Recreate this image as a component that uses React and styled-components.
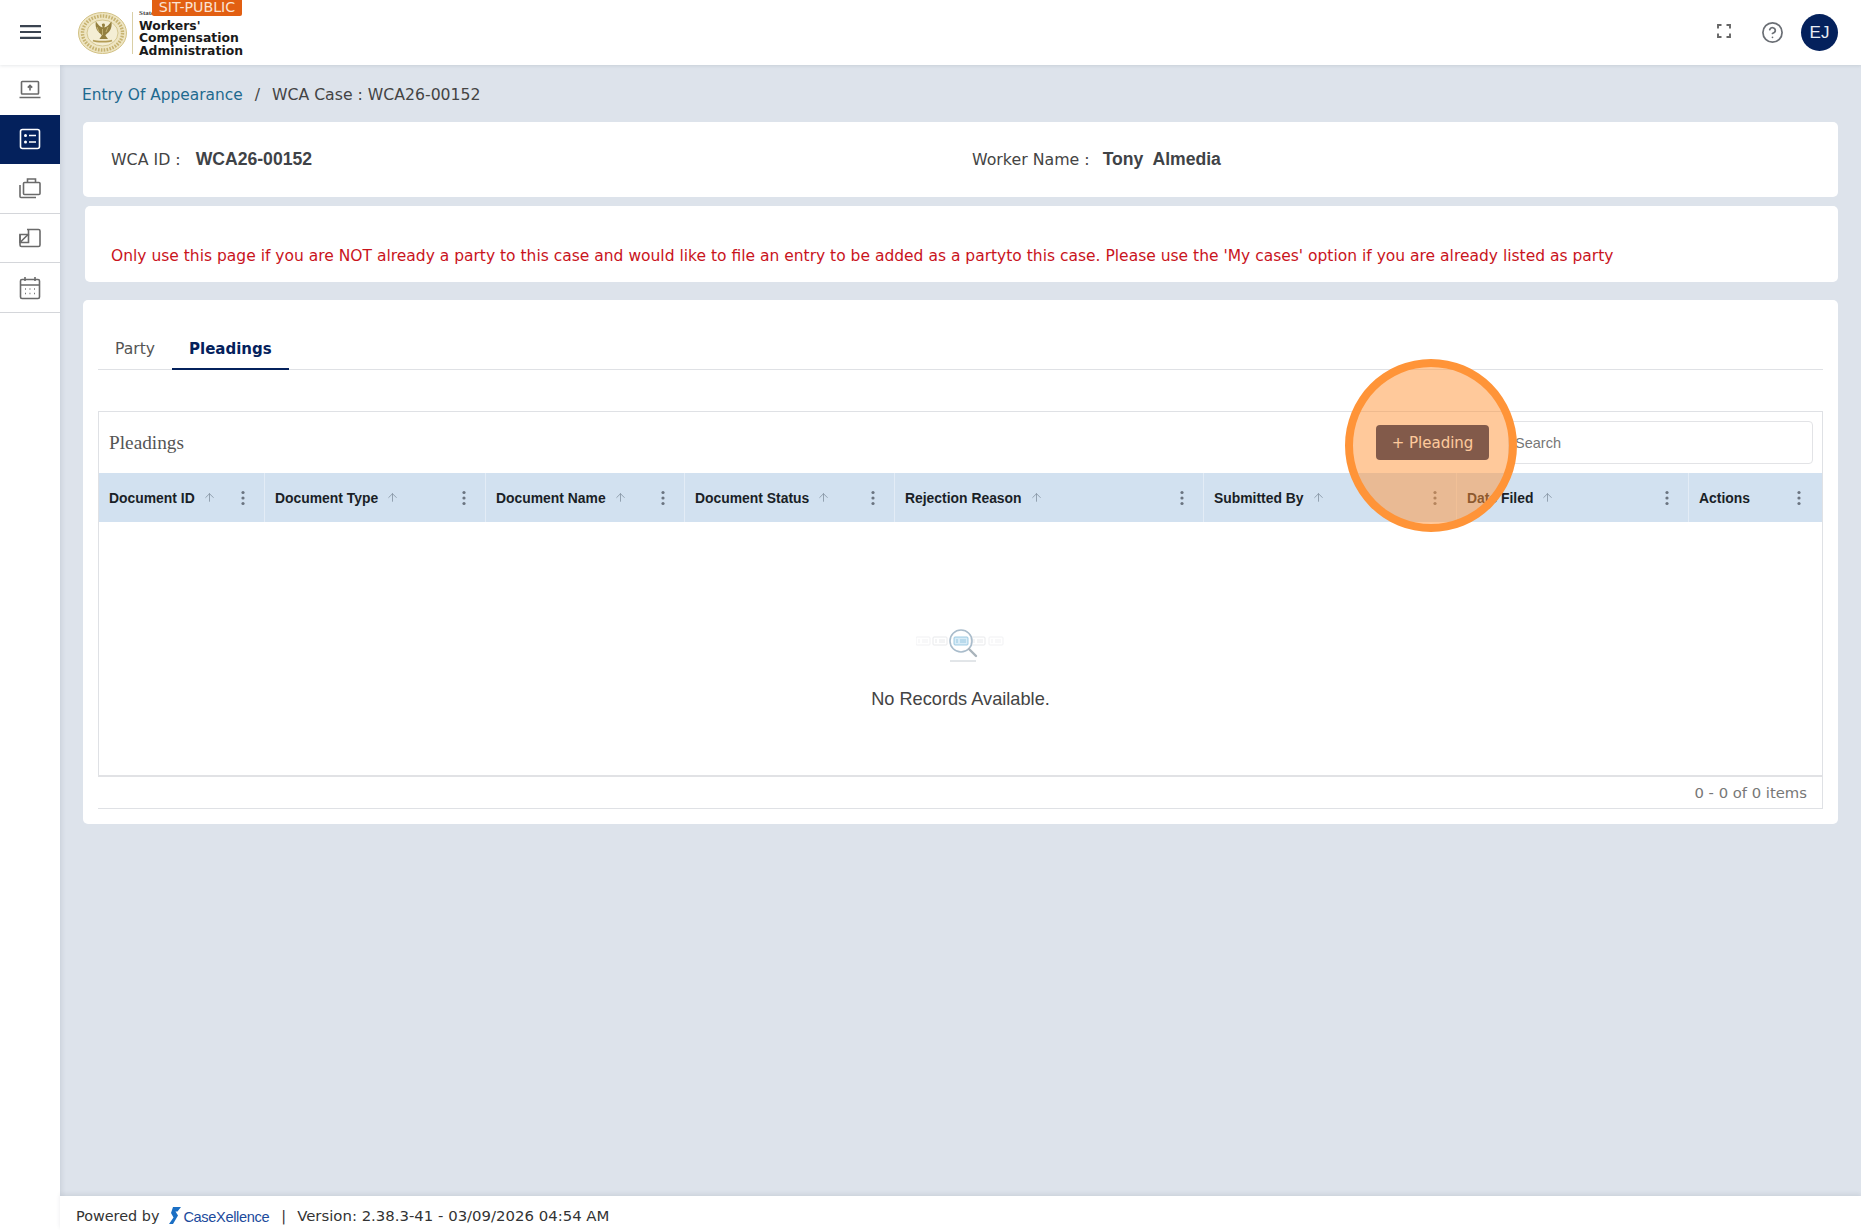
import React from "react";
import styled, { createGlobalStyle } from "styled-components";
import { ArrowUp, CircleHelp } from "lucide-react";

const Global = createGlobalStyle`
  html, body { margin: 0; padding: 0; background: #dde3eb; }
  * { box-sizing: border-box; }
  body { font-family: "DejaVu Sans", sans-serif; color: #444; }
`;

const Shell = styled.div`
  position: relative;
  width: 1861px;
  height: 1230px;
  overflow: hidden;
  display: grid;
  grid-template-columns: 60px 1fr;
  grid-template-rows: 65px 1fr 34px;
  background: #dde3eb;
`;

/* Header */
const Header = styled.header`
  grid-column: 1 / 3;
  display: flex;
  align-items: center;
  background: #fff;
  padding: 0 23px 0 20px;
  box-shadow: 0 1px 3px rgba(60, 70, 90, 0.12);
  z-index: 2;
`;
const Burger = styled.svg`
  width: 21px;
  height: 14px;
  margin-top: -2px;
  flex: none;
`;
const Brand = styled.div`
  position: relative;
  display: flex;
  align-items: center;
  margin-left: 37px;
  height: 65px;
  padding-top: 1px;
`;
const Seal = styled.svg`
  width: 49px;
  height: 42px;
`;
const BrandRule = styled.span`
  display: block;
  width: 1px;
  height: 42px;
  margin: 0 6px 0 5px;
  background: #d9cfa6;
`;
const BrandText = styled.div`
  font-family: "DejaVu Sans", sans-serif;
  font-weight: 700;
  font-size: 12.4px;
  line-height: 12.1px;
  color: #1a1a1a;
  padding-top: 11px;
`;
const State = styled.span`
  position: absolute;
  left: 61px;
  top: 9px;
  font-family: "Liberation Serif", serif;
  font-weight: 700;
  font-size: 7px;
  color: #444;
`;
const EnvBadge = styled.div`
  position: absolute;
  left: 74px;
  top: 0;
  width: 90px;
  height: 16px;
  background: #e25f12;
  color: #fbe3d2;
  font-size: 14.2px;
  line-height: 14px;
  text-align: center;
  border-radius: 0 0 2px 2px;
  white-space: nowrap;
`;
const HeaderRight = styled.div`
  margin-left: auto;
  display: flex;
  align-items: center;
`;
const Expand = styled.svg`
  width: 14px;
  height: 14px;
  margin-right: 30px;
  margin-top: -3px;
`;
const HelpIcon = styled(CircleHelp)`
  width: 23px;
  height: 23px;
  color: #6b6f75;
  margin-right: 17px;
`;
const Avatar = styled.div`
  width: 37px;
  height: 37px;
  border-radius: 50%;
  background: #04215c;
  color: #e8edf5;
  font-family: "Liberation Sans", sans-serif;
  font-size: 17px;
  display: flex;
  align-items: center;
  justify-content: center;
`;

/* Sidebar */
const Sidebar = styled.nav`
  grid-row: 2 / 4;
  background: #fff;
  box-shadow: 1px 0 5px rgba(60, 70, 90, 0.14);
  z-index: 1;
`;
const NavItem = styled.div`
  height: 49.6px;
  display: flex;
  align-items: center;
  justify-content: center;
  background: ${(p) => (p.$active ? "#04215c" : "#fff")};
  color: ${(p) => (p.$active ? "#fff" : "#6a6a6a")};
  border-bottom: ${(p) => (p.$line ? "1px solid #d4d6da" : "0")};
`;
const NavIcon = styled.svg`
  width: 24px;
  height: 24px;
  fill: none;
  stroke: currentColor;
  stroke-width: 1.6;
`;

/* Main */
const Main = styled.main`
  padding: 0 23px;
  min-width: 0;
`;
const Crumbs = styled.div`
  height: 57px;
  display: flex;
  align-items: flex-start;
  font-size: 15.7px;
  line-height: 20px;
  color: #444;
  padding-top: 20px;
`;
const CrumbLink = styled.span`
  color: #1e6a8f;
  font-size: 15.4px;
  margin-left: -1px;
`;
const CrumbSep = styled.span`
  margin: 0 12px;
`;
const Card = styled.section`
  background: #fff;
  border-radius: 5px;
  margin-left: ${(p) => p.$inset || 0}px;
  height: ${(p) => p.$h}px;
  margin-bottom: ${(p) => p.$mb || 0}px;
`;
const InfoRow = styled.div`
  display: grid;
  grid-template-columns: 861px 1fr;
  align-items: center;
  height: 100%;
  padding: 0 0 1px 28px;
  font-size: 15.8px;
  color: #444;
`;
const Field = styled.div`
  display: flex;
  align-items: baseline;
`;
const FieldValue = styled.b`
  font-family: "Liberation Sans", sans-serif;
  font-size: 17.6px;
  font-weight: 700;
  color: #3f4347;
  margin-left: ${(p) => p.$gap}px;
  white-space: pre;
`;
const Notice = styled.div`
  padding: 40px 0 0 26px;
  font-size: 15.5px;
  line-height: 20px;
  color: #c9141c;
  white-space: nowrap;
`;

/* Tabs */
const TabsCard = styled(Card)`
  padding: 0 15px;
`;
const Tabs = styled.div`
  display: flex;
  height: 70px;
  align-items: flex-end;
  border-bottom: 1px solid #dfe1e5;
`;
const Tab = styled.div`
  padding: 0 17px;
  height: 34px;
  font-size: ${(p) => (p.$active ? "15px" : "15.6px")};
  line-height: 26px;
  font-weight: ${(p) => (p.$active ? 700 : 400)};
  color: ${(p) => (p.$active ? "#04215c" : "#555")};
  border-bottom: ${(p) => (p.$active ? "2px solid #04215c" : "0")};
  margin-bottom: -1px;
`;

/* Grid */
const TableBox = styled.div`
  margin-top: 41px;
  height: 398px;
  border: 1px solid #dfe1e5;
  border-left: 0;
  display: flex;
  flex-direction: column;
`;
const GridPart = styled.div`
  flex: 1;
  display: flex;
  flex-direction: column;
  border-left: 1px solid #dfe1e5;
`;
const Toolbar = styled.div`
  height: 61px;
  flex: none;
  display: flex;
  align-items: center;
  padding: 0 9px 0 10px;
`;
const Title = styled.div`
  font-family: "Liberation Serif", serif;
  font-size: 19.3px;
  color: #555;
  margin-right: auto;
`;
const AddButton = styled.button`
  width: 113px;
  height: 35px;
  border: 0;
  border-radius: 4px;
  background: #04215c;
  color: #fff;
  font-family: "DejaVu Sans", sans-serif;
  font-size: 15px;
  padding: 0;
  margin-right: 19px;
`;
const Search = styled.div`
  width: 305px;
  height: 43px;
  border: 1px solid #e2e3e6;
  border-radius: 4px;
  display: flex;
  align-items: center;
  padding-left: 6px;
  font-family: "Liberation Sans", sans-serif;
  font-size: 14.5px;
  color: #777;
`;
const HeadRow = styled.div`
  display: grid;
  grid-template-columns: 166px 221px 199px 210px 309px 253px 232px 1fr;
  height: 49px;
  flex: none;
  background: #d2e1f0;
`;
const HeadCell = styled.div`
  display: flex;
  align-items: center;
  padding: 0 19px 0 10px;
  border-right: 1px solid #e3ecf6;
  font-family: "Liberation Sans", sans-serif;
  font-weight: 700;
  font-size: 13.9px;
  color: #1a1f27;
  &:last-child {
    border-right: 0;
    padding-right: 21px;
  }
`;
const SortIcon = styled(ArrowUp)`
  width: 13px;
  height: 13px;
  margin-left: 8px;
  color: #7e8c9b;
`;
const Kebab = styled.svg`
  width: 4px;
  height: 16px;
  margin-left: auto;
  fill: #6b7480;
`;
const Empty = styled.div`
  flex: 1;
  display: flex;
  flex-direction: column;
  align-items: center;
  padding: 101px 0 0 0;
`;
const EmptyArt = styled.svg`
  width: 90px;
  height: 40px;
`;
const EmptyText = styled.div`
  margin-top: 24px;
  font-family: "Liberation Sans", sans-serif;
  font-size: 18.2px;
  line-height: 24px;
  color: #444;
`;
const Pager = styled.div`
  height: 33px;
  flex: none;
  border-top: 2px solid #e1e2e5;
  display: flex;
  align-items: center;
  justify-content: flex-end;
  padding-right: 15px;
  font-size: 14.8px;
  color: #777;
`;

/* Footer */
const Footer = styled.footer`
  background: #fff;
  display: flex;
  align-items: center;
  padding: 5px 0 0 16px;
  font-size: 14.4px;
  color: #333;
  box-shadow: 0 -2px 4px rgba(60, 70, 90, 0.1);
  z-index: 1;
`;
const LogoMark = styled.svg`
  width: 12px;
  height: 17px;
  margin: 0 2px 0 10px;
`;
const LogoWord = styled.span`
  font-family: "Liberation Sans", sans-serif;
  font-size: 14.6px;
  letter-spacing: -0.35px;
  color: #1b4a9c;
  margin-top: 2px;
`;
const FootSep = styled.span`
  margin: 0 11px 0 12px;
`;
const Version = styled.span`
  font-size: 14.9px;
`;

/* Highlight ring over the button */
const Spotlight = styled.div`
  position: absolute;
  left: 1345px;
  top: 359px;
  width: 172px;
  height: 173px;
  border-radius: 50%;
  border: 8px solid #ff9438;
  background: rgba(255, 148, 56, 0.5);
  z-index: 5;
`;

const columns = [
  "Document ID",
  "Document Type",
  "Document Name",
  "Document Status",
  "Rejection Reason",
  "Submitted By",
  "Date Filed",
  "Actions",
];

const KebabIcon = () => (
  <Kebab viewBox="0 0 4 16">
    <circle cx="2" cy="2.5" r="1.6" />
    <circle cx="2" cy="8" r="1.6" />
    <circle cx="2" cy="13.5" r="1.6" />
  </Kebab>
);

const MiniCard = ({ x, o, blue }) => (
  <g opacity={o} fill="none" stroke={blue ? "#8cc0dc" : "#c9ccd0"} strokeWidth="0.8">
    <rect x={x} y="14" width="14" height="8" rx="1" fill={blue ? "#d8ecf7" : "none"} />
    <path d={`M${x + 2} 17h2M${x + 2} 19h2M${x + 6} 17h6M${x + 6} 19h6`} />
  </g>
);

export default function App() {
  return (
    <Shell>
      <Global />
      <Header>
        <Burger viewBox="0 0 21 14">
          <path d="M0 1.2h21M0 7h21M0 12.8h21" stroke="#3a4350" strokeWidth="2.2" />
        </Burger>
        <Brand>
          <Seal viewBox="0 0 49 42">
            <ellipse cx="24.5" cy="21" rx="24" ry="20.5" fill="#eee5c2" />
            <ellipse cx="24.5" cy="21" rx="24" ry="20.5" fill="none" stroke="#d2c184" strokeWidth="1" />
            <ellipse cx="24.5" cy="21" rx="20" ry="17" fill="none" stroke="#c7b371" strokeWidth="3.4" strokeDasharray="1.6 1.3" />
            <ellipse cx="24.5" cy="21" rx="15.5" ry="13" fill="#f4eed4" stroke="#c9b877" strokeWidth="0.7" />
            <path d="M24 12c1.5-1 3-.5 3 1 0 1-.6 1.6-.6 2.4 2.4-.6 5-3 7-6 .9 4.5-.5 9-3.6 11.5-1 .9-2 1.4-2.4 2.6l2.6 3.5h-8.6l2.4-3.5c-.4-1.2-1.4-1.7-2.4-2.6C18.3 18 17 13.5 17.9 9.4c2 3 4.2 5.4 6.6 6 0-1.2-1-2.4-.5-3.4z" fill="#94803f" />
            <path d="M21 20l-2-5M28 20l2-5M24.5 17v6" stroke="#d5c587" strokeWidth="0.7" />
            <path d="M15 28.5c3 1.6 16 1.6 19 0" fill="none" stroke="#b39c55" strokeWidth="1.8" />
          </Seal>
          <BrandRule />
          <BrandText>
            Workers'
            <br />
            Compensation
            <br />
            Administration
          </BrandText>
          <State>State</State>
          <EnvBadge>SIT-PUBLIC</EnvBadge>
        </Brand>
        <HeaderRight>
          <Expand viewBox="0 0 14 14" fill="none" stroke="#666" strokeWidth="1.9">
            <path d="M1 4.5V1h3.5M9.5 1H13v3.5M13 9.5V13H9.5M4.5 13H1V9.5" />
          </Expand>
          <HelpIcon strokeWidth={1.8} />
          <Avatar>EJ</Avatar>
        </HeaderRight>
      </Header>

      <Sidebar>
        <NavItem>
          <NavIcon viewBox="0 0 24 24">
            <rect x="3.5" y="3.5" width="17" height="12.5" rx="0.8" />
            <path d="M1.5 19.5h21M12 12.5V7.5M9.8 9.6L12 7.4l2.2 2.2" />
          </NavIcon>
        </NavItem>
        <NavItem $active>
          <NavIcon viewBox="0 0 24 24">
            <rect x="2.5" y="2.5" width="19" height="19" rx="2" />
            <circle cx="7.5" cy="8.5" r="1.5" fill="currentColor" stroke="none" />
            <circle cx="7.5" cy="15" r="1.5" fill="currentColor" stroke="none" />
            <path d="M11 8.5h7M11 15h7" />
          </NavIcon>
        </NavItem>
        <NavItem $line>
          <NavIcon viewBox="0 0 24 24">
            <rect x="5.5" y="6.5" width="16.5" height="12" rx="1" />
            <path d="M9.5 6.5V3h8v3.5M2 9v11.5a1 1 0 0 0 1 1h15" />
          </NavIcon>
        </NavItem>
        <NavItem $line>
          <NavIcon viewBox="0 0 24 24">
            <path d="M9 3.5h11.5A1.5 1.5 0 0 1 22 5v14a1.5 1.5 0 0 1-1.5 1.5h-17A1.5 1.5 0 0 1 2 19V8.5h8.5V3.5" />
            <path d="M2 8.5V16.5h8.5V8.5M2.5 16l7.5-7.5" />
          </NavIcon>
        </NavItem>
        <NavItem $line>
          <NavIcon viewBox="0 0 24 24">
            <rect x="2.5" y="3.5" width="19" height="19" rx="1.5" />
            <path d="M2.5 9h19M7 1v4M17 1v4" />
            <path d="M7 13h.9M11.5 13h.9M16 13h.9M7 17.5h.9M11.5 17.5h.9M16 17.5h.9" strokeWidth="1.4" />
          </NavIcon>
        </NavItem>
      </Sidebar>

      <Main>
        <Crumbs>
          <CrumbLink>Entry Of Appearance</CrumbLink>
          <CrumbSep>/</CrumbSep>
          WCA Case : WCA26-00152
        </Crumbs>
        <Card $h={75} $mb={9}>
          <InfoRow>
            <Field>
              WCA ID :<FieldValue $gap={15}>WCA26-00152</FieldValue>
            </Field>
            <Field>
              Worker Name :<FieldValue $gap={13}>Tony  Almedia</FieldValue>
            </Field>
          </InfoRow>
        </Card>
        <Card $h={76} $mb={18} $inset={2}>
          <Notice>
            Only use this page if you are NOT already a party to this case and would like to file an entry to be added as a partyto this case. Please use the 'My cases' option if you are already listed as party
          </Notice>
        </Card>
        <TabsCard as={Card} $h={524} $inset={1}>
          <Tabs>
            <Tab>Party</Tab>
            <Tab $active>Pleadings</Tab>
          </Tabs>
          <TableBox>
            <GridPart>
              <Toolbar>
                <Title>Pleadings</Title>
                <AddButton>+ Pleading</AddButton>
                <Search>Search</Search>
              </Toolbar>
              <HeadRow>
                {columns.map((c) => (
                  <HeadCell key={c}>
                    {c}
                    {c !== "Actions" && <SortIcon strokeWidth={1.4} />}
                    <KebabIcon />
                  </HeadCell>
                ))}
              </HeadRow>
              <Empty>
                <EmptyArt viewBox="0 0 90 40">
                  <MiniCard x={0} o={0.3} />
                  <MiniCard x={17} o={0.5} />
                  <MiniCard x={38} blue />
                  <MiniCard x={55} o={0.5} />
                  <MiniCard x={73} o={0.3} />
                  <circle cx="45" cy="18" r="11" fill="none" stroke="#a9bccb" strokeWidth="1.6" />
                  <path d="M53 26l7 7" stroke="#a9b3bb" strokeWidth="2.4" strokeLinecap="round" />
                  <path d="M34 38h26" stroke="#c5ccd2" strokeWidth="1" />
                </EmptyArt>
                <EmptyText>No Records Available.</EmptyText>
              </Empty>
            </GridPart>
            <Pager>0 - 0 of 0 items</Pager>
          </TableBox>
        </TabsCard>
      </Main>

      <Footer>
        Powered by
        <LogoMark viewBox="0 0 12 17">
          <path d="M4 0h8L8.5 4.5H6.5L9 8.5 4 17H0l4.5-6.5L2 6z" fill="#1b6fc4" />
        </LogoMark>
        <LogoWord>CaseXellence</LogoWord>
        <FootSep>|</FootSep>
        <Version>Version: 2.38.3-41 - 03/09/2026 04:54 AM</Version>
      </Footer>

      <Spotlight />
    </Shell>
  );
}
